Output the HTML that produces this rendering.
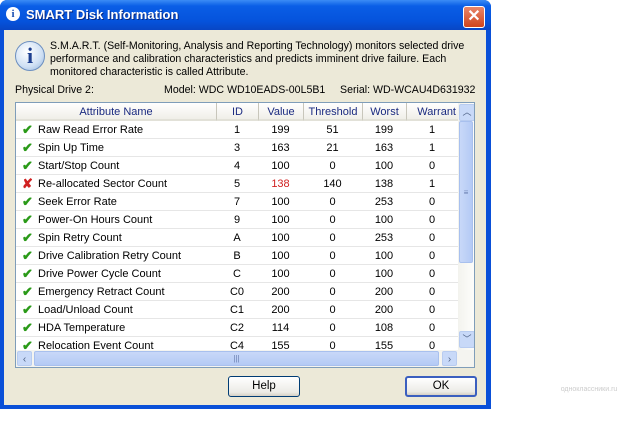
<!DOCTYPE html><html><head><style>
body{margin:0;width:640px;height:411px;background:#fff;position:relative;overflow:hidden;font-family:"Liberation Sans",sans-serif;font-size:10.6px;color:#000}
.win{position:absolute;left:0;top:0;width:491px;height:409px;background:#0a50d8;border-radius:7px 7px 0 0}
.title{position:absolute;left:0;top:0;width:491px;height:30px;border-radius:7px 7px 0 0;background:linear-gradient(#3b8cf5,#0a5ee6 20%,#0553dc 70%,#0846c4)}
.title span{position:absolute;left:26px;top:7px;color:#fff;font-weight:bold;font-size:13px;text-shadow:1px 1px #0a2a80}
.client{position:absolute;left:4px;top:30px;width:482px;height:375px;background:#ece9d8}
.close{position:absolute;left:463px;top:6px;width:20px;height:20px;border:1px solid #fff;border-radius:3px;background:linear-gradient(#e8866a,#d0441c);color:#fff;font-weight:bold;font-size:16px;text-align:center;line-height:20px}
.t{position:absolute;white-space:nowrap}
.tbl{position:absolute;left:15px;top:102px;width:460px;height:266px;background:#fff;border:1px solid #7f9db9;box-sizing:border-box;overflow:hidden}
.hdr{position:absolute;top:0;height:18px;background:linear-gradient(#fff,#f0efe8);border-bottom:2px solid #e2e1d8;color:#1a2a80;text-align:center;line-height:18px;box-sizing:border-box;font-size:11px}
.row{position:absolute;left:0;width:442px;height:18px;border-bottom:1px solid #e6e6e6;box-sizing:border-box}
.c{position:absolute;top:1px;text-align:center;line-height:16px;font-size:11px}
.ck{position:absolute;left:6px;top:2px;color:#2a9a18;font-size:13px;font-weight:bold;line-height:14px}
.x{color:#d02020}
.btn{position:absolute;top:376px;height:21px;width:72px;border:1px solid #003c74;border-radius:3px;background:linear-gradient(#fff,#ecebe6 80%,#d6d0c5);text-align:center;line-height:19px;font-size:11.5px;box-sizing:border-box}
</style></head><body>
<div class="win"><div class="title"><span>SMART Disk Information</span></div>
<div style="position:absolute;left:6px;top:7px;width:14px;height:14px;border-radius:50%;background:#fff;color:#1b4fb0;font:bold 11px 'Liberation Serif',serif;text-align:center;line-height:14px">i</div>
<div class="close">✕</div>
<div class="client"></div></div>
<div style="position:absolute;left:15px;top:41px;width:28px;height:28px;border-radius:50%;background:radial-gradient(circle at 40% 35%,#fff,#cfe0f4 60%,#8fb0d8);border:1px solid #6c8fc0;color:#1d3f90;font:bold 22px 'Liberation Serif',serif;text-align:center;line-height:28px">i</div>
<div class="t" style="left:50px;top:40px;line-height:13px">S.M.A.R.T. (Self-Monitoring, Analysis and Reporting Technology) monitors selected drive<br>performance and calibration characteristics and predicts imminent drive failure. Each<br>monitored characteristic is called Attribute.</div>
<div class="t" style="left:15px;top:84px">Physical Drive 2:</div>
<div class="t" style="left:164px;top:84px">Model: WDC WD10EADS-00L5B1</div>
<div class="t" style="left:340px;top:84px">Serial: WD-WCAU4D631932</div>
<div class="tbl">
<div class="hdr" style="left:0;width:200px">Attribute Name</div>
<div class="hdr" style="left:200px;width:42px;border-left:1px solid #c8c6bb">ID</div>
<div class="hdr" style="left:242px;width:45px;border-left:1px solid #c8c6bb">Value</div>
<div class="hdr" style="left:287px;width:59px;border-left:1px solid #c8c6bb">Threshold</div>
<div class="hdr" style="left:346px;width:44px;border-left:1px solid #c8c6bb">Worst</div>
<div class="hdr" style="left:390px;width:52px;border-left:1px solid #c8c6bb;text-align:right;padding-right:2px">Warrant</div>
<div id="rows"></div>
<div style="position:absolute;left:442px;top:0;width:16px;height:247px;background:linear-gradient(90deg,#f3f3ee,#fdfdfb)"></div>
<div style="position:absolute;left:443px;top:1px;width:14px;height:15px;border:1px solid #b8ccf0;border-radius:2px;background:#c8d9f8;font-size:9px;text-align:center;line-height:15px;color:#4d6185">︿</div>
<div style="position:absolute;left:443px;top:18px;width:14px;height:142px;border:1px solid #a8c0ee;border-radius:2px;background:linear-gradient(90deg,#c8d8f8,#b4caf5);box-sizing:border-box;text-align:center;line-height:142px;color:#6a7fb0;font-size:8px">≡</div>
<div style="position:absolute;left:443px;top:228px;width:14px;height:15px;border:1px solid #b8ccf0;border-radius:2px;background:#c8d9f8;font-size:9px;text-align:center;line-height:15px;color:#4d6185">﹀</div>
<div style="position:absolute;left:0;top:247px;width:458px;height:17px;background:#f4f4f0"></div>
<div style="position:absolute;left:1px;top:248px;width:15px;height:15px;border:1px solid #b8ccf0;border-radius:2px;background:#c8d9f8;font-size:10px;text-align:center;line-height:15px;color:#4d6185;box-sizing:border-box">‹</div>
<div style="position:absolute;left:18px;top:248px;width:405px;height:15px;border:1px solid #a8c0ee;border-radius:2px;background:linear-gradient(#c8d8f8,#b4caf5);box-sizing:border-box;text-align:center;font-size:8px;line-height:13px;color:#6a7fb0">|||</div>
<div style="position:absolute;left:426px;top:248px;width:15px;height:15px;border:1px solid #b8ccf0;border-radius:2px;background:#c8d9f8;font-size:10px;text-align:center;line-height:15px;color:#4d6185;box-sizing:border-box">›</div>
</div>
<div class="btn" style="left:228px">Help</div>
<div class="btn" style="left:405px;border:2px solid #3b5fbf;line-height:17px">OK</div>
<div class="t" style="left:556px;top:350px;width:66px;height:40px;color:#ccc;font-size:7px;text-align:center;line-height:80px">одноклассники.ru</div>
<script>
var d=[["v","Raw Read Error Rate","1","199","51","199","1"],["v","Spin Up Time","3","163","21","163","1"],["v","Start/Stop Count","4","100","0","100","0"],["x","Re-allocated Sector Count","5","138","140","138","1"],["v","Seek Error Rate","7","100","0","253","0"],["v","Power-On Hours Count","9","100","0","100","0"],["v","Spin Retry Count","A","100","0","253","0"],["v","Drive Calibration Retry Count","B","100","0","100","0"],["v","Drive Power Cycle Count","C","100","0","100","0"],["v","Emergency Retract Count","C0","200","0","200","0"],["v","Load/Unload Count","C1","200","0","200","0"],["v","HDA Temperature","C2","114","0","108","0"],["v","Relocation Event Count","C4","155","0","155","0"]];
var h="",L=[[200,42],[242,45],[287,59],[346,44],[390,52]];
d.forEach(function(r,i){h+='<div class="row" style="top:'+(18+i*18)+'px">'+(r[0]=="v"?'<span class="ck">✔</span>':'<span class="ck x">✘</span>')+'<span class="c" style="left:22px;text-align:left">'+r[1]+'</span>';
for(var j=0;j<5;j++)h+='<span class="c" style="left:'+L[j][0]+'px;width:'+L[j][1]+'px'+(i==3&&j==1?';color:#d02020':'')+'">'+r[j+2]+'</span>';h+='</div>'});
document.getElementById("rows").innerHTML=h;
</script>
</body></html>
